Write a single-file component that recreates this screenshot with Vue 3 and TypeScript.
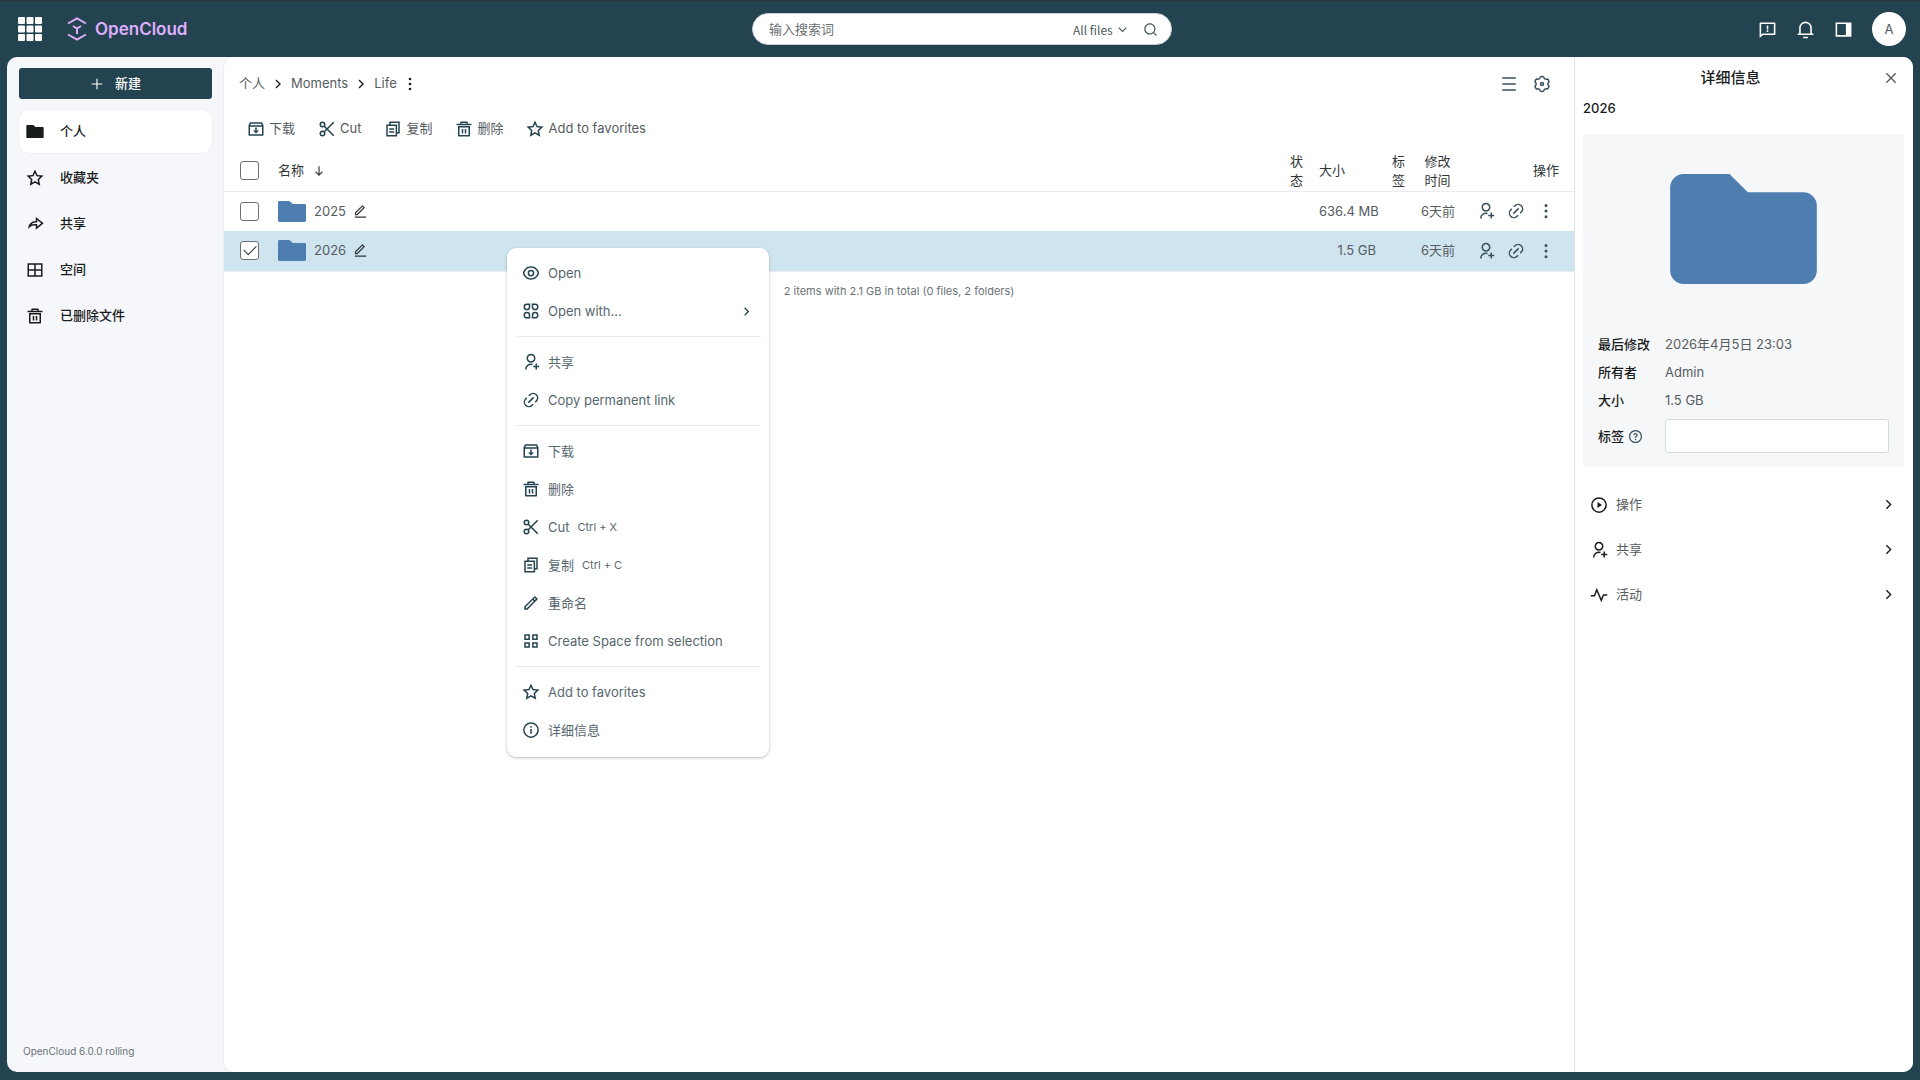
<script setup lang="ts">
import { h, ref } from 'vue'

interface Shape {
  fill?: string
  stroke?: string
}

const shapes: Record<string, Shape> = {
  star: { fill: 'M12 18.26l-7.053 3.948 1.575-7.928L.588 8.792l8.027-.952L12 .5l3.386 7.34 8.027.952-5.934 5.488 1.575 7.928L12 18.26Zm0-2.292 4.247 2.377-.948-4.773 3.573-3.305-4.833-.573L12 5.275 9.962 9.694l-4.833.573 3.573 3.305-.948 4.773L12 15.968Z' },
  forward: { fill: 'M13 14h-2c-3.46 0-6.46 1.95-7.97 4.81C3.01 18.54 3 18.27 3 18 3 12.48 7.48 8 13 8V2.5L23.5 11 13 19.5V14Zm-2-2h4v3.31L20.32 11 15 6.69V10h-2c-2.42 0-4.59 1.08-6.06 2.78C8.2 12.28 9.57 12 11 12Z' },
  spaces: { stroke: 'M3 4h18v16H3ZM12 4v16M3 12h18' },
  trash: { fill: 'M4 8h16v13a1 1 0 0 1-1 1H5a1 1 0 0 1-1-1V8Zm2 2v10h12V10H6Zm3 2h2v6H9v-6Zm4 0h2v6h-2v-6ZM7 5V3a1 1 0 0 1 1-1h8a1 1 0 0 1 1 1v2h5v2H2V5h5Zm2-1v1h6V4H9Z' },
  download: { fill: 'M20 3l2 4v13a1 1 0 0 1-1 1H3a1 1 0 0 1-1-1V7.004L4 3h16Zm0 6H4v10h16V9Zm-7 1v4h3l-4 4-4-4h3v-4h2Zm5.764-5H5.236l-.999 2h15.527l-1-2Z' },
  cut: { stroke: 'M8.3 8.3 21 21M8.3 15.7 21 3', fill: 'M6 2a4 4 0 1 1 0 8 4 4 0 0 1 0-8Zm0 2a2 2 0 1 0 0 4 2 2 0 0 0 0-4ZM6 14a4 4 0 1 1 0 8 4 4 0 0 1 0-8Zm0 2a2 2 0 1 0 0 4 2 2 0 0 0 0-4Z' },
  copy: { stroke: 'M8 7V3h12v14h-3.500M4 7h12.500v14H4ZM7 12h6.500M7 16h6.500' },
  eye: { fill: 'M12 3c5.392 0 9.878 3.88 10.819 9-.94 5.12-5.427 9-10.819 9s-9.878-3.88-10.818-9C2.122 6.88 6.608 3 12 3Zm0 16c4.236 0 7.86-2.948 8.778-7-.918-4.052-4.542-7-8.778-7s-7.86 2.948-8.777 7c.917 4.052 4.541 7 8.777 7Zm0-2.5a4.5 4.5 0 1 1 0-9 4.5 4.5 0 0 1 0 9Zm0-2a2.5 2.5 0 1 0 0-5 2.5 2.5 0 0 0 0 5Z' },
  apps: { stroke: 'M6.5 3H10v3.5A3.5 3.5 0 1 1 6.5 3ZM17.5 3H14v3.5A3.5 3.5 0 1 0 17.5 3ZM6.5 21H10v-3.5A3.5 3.5 0 1 0 6.5 21ZM17.5 21H14v-3.5a3.5 3.5 0 1 1 3.5 3.5Z' },
  userAdd: { fill: 'M14 14.252v2.09A6 6 0 0 0 6 22H4a8 8 0 0 1 10-7.748ZM12 13c-3.315 0-6-2.685-6-6s2.685-6 6-6 6 2.685 6 6-2.685 6-6 6Zm0-2c2.21 0 4-1.79 4-4s-1.79-4-4-4-4 1.79-4 4 1.79 4 4 4Zm6 6v-3h2v3h3v2h-3v3h-2v-3h-3v-2h3Z' },
  link: { fill: 'M18.364 15.536 16.95 14.12l1.414-1.414a5 5 0 1 0-7.071-7.071L9.878 7.05 8.464 5.636l1.415-1.414a7 7 0 0 1 9.899 9.9l-1.414 1.414Zm-2.829 2.828-1.414 1.414a7 7 0 0 1-9.9-9.9l1.415-1.414L7.05 9.88l-1.414 1.414a5 5 0 1 0 7.07 7.07l1.415-1.414 1.414 1.415Zm-.707-10.607 1.415 1.415-7.072 7.07-1.414-1.414 7.071-7.07Z' },
  pencil: { fill: 'M15.728 9.576l-1.414-1.414L5 17.476v1.414h1.414l9.314-9.314Zm1.414-1.414 1.414-1.414-1.414-1.414-1.414 1.414 1.414 1.414ZM7.243 20.89H3v-4.243L16.435 3.212a1 1 0 0 1 1.414 0l2.829 2.829a1 1 0 0 1 0 1.414L7.243 20.89Z' },
  edit: { fill: 'M6.414 15.89 16.556 5.748l-1.414-1.414L5 14.476v1.414h1.414Zm.829 2H3v-4.243L14.435 2.212a1 1 0 0 1 1.414 0l2.829 2.829a1 1 0 0 1 0 1.414L7.243 17.89ZM3 19.89h18v2H3v-2Z' },
  squares: { stroke: 'M4 4h5.5v5.5H4ZM14.5 4H20v5.5h-5.5ZM4 14.5h5.5V20H4ZM14.5 14.5H20V20h-5.5Z' },
  info: { stroke: 'M12 2.500a9.500 9.500 0 1 1 0 19 9.500 9.500 0 0 1 0-19ZM12 10.500V17M12 7v2' },
  help: { stroke: 'M12 2.500a9.500 9.500 0 1 1 0 19 9.500 9.500 0 0 1 0-19ZM9.5 9.8a2.5 2.5 0 1 1 3.4 2.3c-.6.3-.9.7-.9 1.3v.6M12 15.5v2' },
  play: { stroke: 'M12 2.500a9.500 9.500 0 1 1 0 19 9.500 9.500 0 0 1 0-19Z', fill: 'M10 8l6 4-6 4Z' },
  pulse: { stroke: 'M1 13h5l3-8 6 14 3-7h5' },
  right: { stroke: 'M9 6l6 6-6 6' },
  down: { stroke: 'M6 9l6 6 6-6' },
  arrowDown: { stroke: 'M12 4v15M6 13l6 6 6-6' },
  dots: { fill: 'M12 2.5a2 2 0 1 1 0 4 2 2 0 0 1 0-4ZM12 10a2 2 0 1 1 0 4 2 2 0 0 1 0-4ZM12 17.500a2 2 0 1 1 0 4 2 2 0 0 1 0-4Z' },
  plus: { stroke: 'M12 3v18M3 12h18' },
  close: { stroke: 'M5 5l14 14M19 5 5 19' },
  menu: { stroke: 'M3 4h18M3 12h18M3 20h18' },
  gear: { stroke: 'M9.800 2.600Q12 1.500 14.200 2.600 15 6.600 19.200 5.300 21.200 6.700 21.300 9.200 18.200 12 21.300 14.800 21.200 17.300 19.200 18.700 15 17.400 14.200 21.400 12 22.500 9.800 21.400 9 17.400 4.800 18.700 2.800 17.300 2.700 14.800 5.800 12 2.700 9.200 2.800 6.700 4.800 5.300 9 6.600 9.800 2.600ZM12 10a2 2 0 1 1 0 4 2 2 0 0 1 0-4Z' },
  search: { fill: 'M18.031 16.617l4.283 4.282-1.415 1.415-4.282-4.283A8.960 8.960 0 0 1 11 20c-4.968 0-9-4.032-9-9s4.032-9 9-9 9 4.032 9 9a8.960 8.960 0 0 1-1.969 5.617Zm-2.006-.742A6.977 6.977 0 0 0 18 11c0-3.868-3.133-7-7-7-3.868 0-7 3.132-7 7 0 3.867 3.132 7 7 7a6.977 6.977 0 0 0 4.875-1.975l.15-.15Z' },
  feedback: { fill: 'M6.455 19 2 22.500V4a1 1 0 0 1 1-1h18a1 1 0 0 1 1 1v14a1 1 0 0 1-1 1H6.455Zm-.692-2H20V5H4v13.385L5.763 17ZM11 13h2v2h-2v-2Zm0-6h2v5h-2V7Z' },
  bell: { fill: 'M20 17h2v2H2v-2h2v-7a8 8 0 1 1 16 0v7Zm-2 0v-7a6 6 0 1 0-12 0v7h12Zm-9 4h6v2H9v-2Z' },
  panel: { stroke: 'M3 4h18v16H3Z', fill: 'M15 4h6v16h-6Z' },
  grid: { fill: 'M1 0h5a1 1 0 0 1 1 1v5a1 1 0 0 1-1 1H1a1 1 0 0 1-1-1V1a1 1 0 0 1 1-1ZM9.500 0h5a1 1 0 0 1 1 1v5a1 1 0 0 1-1 1h-5a1 1 0 0 1-1-1V1a1 1 0 0 1 1-1ZM18 0h5a1 1 0 0 1 1 1v5a1 1 0 0 1-1 1h-5a1 1 0 0 1-1-1V1a1 1 0 0 1 1-1ZM1 8.500h5a1 1 0 0 1 1 1v5a1 1 0 0 1-1 1H1a1 1 0 0 1-1-1v-5a1 1 0 0 1 1-1ZM9.500 8.500h5a1 1 0 0 1 1 1v5a1 1 0 0 1-1 1h-5a1 1 0 0 1-1-1v-5a1 1 0 0 1 1-1ZM18 8.500h5a1 1 0 0 1 1 1v5a1 1 0 0 1-1 1h-5a1 1 0 0 1-1-1v-5a1 1 0 0 1 1-1ZM1 17h5a1 1 0 0 1 1 1v5a1 1 0 0 1-1 1H1a1 1 0 0 1-1-1v-5a1 1 0 0 1 1-1ZM9.500 17h5a1 1 0 0 1 1 1v5a1 1 0 0 1-1 1h-5a1 1 0 0 1-1-1v-5a1 1 0 0 1 1-1ZM18 17h5a1 1 0 0 1 1 1v5a1 1 0 0 1-1 1h-5a1 1 0 0 1-1-1v-5a1 1 0 0 1 1-1Z' },
}

const folderPath = 'M2.200 0h7.500l3 3h9.100A2.200 2.200 0 0 1 24 5.200v10.600a2.200 2.200 0 0 1-2.200 2.200H2.200A2.200 2.200 0 0 1 0 15.800V2.200A2.200 2.200 0 0 1 2.200 0Z'
const smallFolderPath = 'M1.200 0h8.500l3 2.600h10.100A1.200 1.200 0 0 1 24 3.800v13a1.200 1.200 0 0 1-1.200 1.200H1.200A1.200 1.200 0 0 1 0 16.800V1.200A1.200 1.200 0 0 1 1.200 0Z'

// Folders are wider than tall, so they use a 4:3 box instead of the square one.
const Icon = (props: { name: string; size?: number }) => {
  const size = props.size ?? 18
  if (props.name === 'folder') {
    return h('svg', { class: 'icon', viewBox: '0 0 24 18', width: size, height: Math.floor(size * 0.75), 'aria-hidden': 'true' }, [
      h('path', { d: size > 40 ? folderPath : smallFolderPath, fill: 'currentColor' }),
    ])
  }
  const shape = shapes[props.name]
  return h('svg', { class: 'icon', viewBox: '0 0 24 24', width: size, height: size, 'aria-hidden': 'true' }, [
    shape.fill ? h('path', { d: shape.fill, fill: 'currentColor', 'fill-rule': 'evenodd' }) : null,
    shape.stroke ? h('path', { d: shape.stroke, fill: 'none', stroke: 'currentColor', 'stroke-width': 2 }) : null,
  ])
}
Icon.props = ['name', 'size']

const nav = [
  { icon: 'folder', label: '个人', active: true },
  { icon: 'star', label: '收藏夹', active: false },
  { icon: 'forward', label: '共享', active: false },
  { icon: 'spaces', label: '空间', active: false },
  { icon: 'trash', label: '已删除文件', active: false },
]

const actions = [
  { icon: 'download', label: '下载' },
  { icon: 'cut', label: 'Cut' },
  { icon: 'copy', label: '复制' },
  { icon: 'trash', label: '删除' },
  { icon: 'star', label: 'Add to favorites' },
]

const rows = ref([
  { name: '2025', size: '636.4 MB', modified: '6天前', selected: false },
  { name: '2026', size: '1.5 GB', modified: '6天前', selected: true },
])

interface MenuItem {
  icon: string
  label: string
  keys?: string
  sub?: boolean
}

const menu: MenuItem[][] = [
  [
    { icon: 'eye', label: 'Open' },
    { icon: 'apps', label: 'Open with...', sub: true },
  ],
  [
    { icon: 'userAdd', label: '共享' },
    { icon: 'link', label: 'Copy permanent link' },
  ],
  [
    { icon: 'download', label: '下载' },
    { icon: 'trash', label: '删除' },
    { icon: 'cut', label: 'Cut', keys: 'Ctrl + X' },
    { icon: 'copy', label: '复制', keys: 'Ctrl + C' },
    { icon: 'pencil', label: '重命名' },
    { icon: 'squares', label: 'Create Space from selection' },
  ],
  [
    { icon: 'star', label: 'Add to favorites' },
    { icon: 'info', label: '详细信息' },
  ],
]

const panels = [
  { icon: 'play', label: '操作' },
  { icon: 'userAdd', label: '共享' },
  { icon: 'pulse', label: '活动' },
]

const allSelected = ref(false)
</script>

<template>
  <div class="app">
    <header class="topbar">
      <div class="brand">
        <button class="plain" aria-label="Applications"><Icon name="grid" :size="24" /></button>
        <a class="logo" href="#">
          <svg viewBox="0 0 20 24" width="20" height="24" aria-hidden="true">
            <path
              d="M1 6.500 10 1.500l9 5M1 17.500l9 5 9-5M6 9l4 2.500L14 9M10 11.500V17"
              fill="none"
              stroke="currentColor"
              stroke-width="2"
            />
          </svg>
          <span>OpenCloud</span>
        </a>
      </div>
      <form class="search" @submit.prevent>
        <input type="search" placeholder="输入搜索词" aria-label="输入搜索词" />
        <select aria-label="Search scope">
          <option>All files</option>
        </select>
        <Icon name="down" :size="15" />
        <button class="plain" aria-label="Search"><Icon name="search" :size="15" /></button>
      </form>
      <div class="tools">
        <button class="plain" aria-label="Feedback"><Icon name="feedback" :size="19" /></button>
        <button class="plain" aria-label="Notifications"><Icon name="bell" :size="19" /></button>
        <button class="plain" aria-label="Toggle sidebar"><Icon name="panel" :size="19" /></button>
        <button class="avatar">A</button>
      </div>
    </header>

    <div class="shell">
      <aside class="sidebar">
        <button class="create"><Icon name="plus" :size="14" />新建</button>
        <nav>
          <a v-for="item in nav" :key="item.label" href="#" :class="{ active: item.active }">
            <Icon :name="item.icon" />
            <span>{{ item.label }}</span>
          </a>
        </nav>
        <footer>OpenCloud 6.0.0 rolling</footer>
      </aside>

      <main>
        <div class="crumb-row">
          <nav class="crumbs">
            <a href="#">个人</a>
            <Icon name="right" :size="16" />
            <a href="#">Moments</a>
            <Icon name="right" :size="16" />
            <a href="#">Life</a>
            <button class="plain" aria-label="More"><Icon name="dots" :size="16" /></button>
          </nav>
          <div class="view-tools">
            <button class="plain" aria-label="View mode"><Icon name="menu" :size="18" /></button>
            <button class="plain" aria-label="Display options"><Icon name="gear" :size="18" /></button>
          </div>
        </div>

        <div class="actions">
          <button v-for="a in actions" :key="a.label" class="plain">
            <Icon :name="a.icon" />
            {{ a.label }}
          </button>
        </div>

        <table class="files">
          <colgroup>
            <col class="c-check" />
            <col />
            <col class="c-char" />
            <col class="c-size" />
            <col class="c-char" />
            <col class="c-date" />
            <col class="c-actions" />
          </colgroup>
          <thead>
            <tr>
              <th class="check"><input v-model="allSelected" type="checkbox" aria-label="Select all" /></th>
              <th><span class="name-head">名称 <Icon name="arrowDown" :size="14" /></span></th>
              <th>状态</th>
              <th>大小</th>
              <th>标签</th>
              <th class="center">修改时间</th>
              <th class="last">操作</th>
            </tr>
          </thead>
          <tbody>
            <tr v-for="row in rows" :key="row.name" :class="{ selected: row.selected }">
              <td class="check"><input v-model="row.selected" type="checkbox" :aria-label="row.name" /></td>
              <td>
                <div class="name">
                  <Icon name="folder" :size="28" />
                  <a href="#">{{ row.name }}</a>
                  <button class="plain" aria-label="Rename"><Icon name="edit" :size="15" /></button>
                </div>
              </td>
              <td></td>
              <td class="right">{{ row.size }}</td>
              <td></td>
              <td class="right">{{ row.modified }}</td>
              <td class="quick">
                <div>
                  <button class="plain" aria-label="Share"><Icon name="userAdd" /></button>
                  <button class="plain" aria-label="Copy link"><Icon name="link" /></button>
                  <button class="plain" aria-label="More"><Icon name="dots" /></button>
                </div>
              </td>
            </tr>
          </tbody>
        </table>
        <p class="summary">2 items with 2.1 GB in total (0 files, 2 folders)</p>

        <div class="context" role="menu">
          <ul v-for="(group, g) in menu" :key="g">
            <li v-for="item in group" :key="item.label">
              <button class="plain" role="menuitem">
                <Icon :name="item.icon" />
                <span>{{ item.label }}</span>
                <kbd v-if="item.keys">{{ item.keys }}</kbd>
                <Icon v-if="item.sub" class="sub" name="right" :size="15" />
              </button>
            </li>
          </ul>
        </div>
      </main>

      <aside class="details">
        <div class="details-head">
          <h2>详细信息</h2>
          <button class="plain" aria-label="Close"><Icon name="close" :size="16" /></button>
        </div>
        <h3>2026</h3>
        <section class="card">
          <div class="preview"><Icon name="folder" :size="147" /></div>
          <dl>
            <dt>最后修改</dt>
            <dd>2026年4月5日 23:03</dd>
            <dt>所有者</dt>
            <dd>Admin</dd>
            <dt>大小</dt>
            <dd>1.5 GB</dd>
            <dt class="tag-label"><label for="tags">标签</label><Icon name="help" :size="15" /></dt>
            <dd><input id="tags" type="text" /></dd>
          </dl>
        </section>
        <div class="panels">
          <button v-for="p in panels" :key="p.label" class="plain">
            <Icon :name="p.icon" />
            <span>{{ p.label }}</span>
            <Icon name="right" :size="17" />
          </button>
        </div>
      </aside>
    </div>
  </div>
</template>

<style>
body {
  margin: 0;
  background: #22434f;
}
</style>

<style scoped>
* {
  box-sizing: border-box;
}
.app {
  display: flex;
  flex-direction: column;
  min-height: 100vh;
  padding: 0 7px 8px;
  border-top: 1px solid #30343f;
  background: #22434f;
  color: #565c5f;
  font: 400 13px/19px Inter, 'Noto Sans CJK SC', sans-serif;
}
button,
input,
select {
  font: inherit;
  color: inherit;
}
a {
  color: inherit;
  text-decoration: none;
}
.icon {
  display: block;
  flex: none;
}
.plain {
  display: flex;
  align-items: center;
  padding: 0;
  border: 0;
  background: none;
  cursor: pointer;
}

.topbar {
  display: grid;
  grid-template-columns: 1fr minmax(200px, 420px) 1fr;
  align-items: center;
  height: 56px;
  padding: 0 7px 0 11px;
  color: #fff;
}
.brand,
.logo,
.tools {
  display: flex;
  align-items: center;
}
.brand {
  gap: 25px;
}
.logo {
  gap: 8px;
  color: #dfaefc;
  font-size: 17px;
  font-weight: 600;
}
.search {
  display: flex;
  align-items: center;
  height: 32px;
  padding: 0 13px 0 16px;
  border: 1px solid #c5ced2;
  border-radius: 16px;
  background: #fff;
  color: #4c5a60;
}
.search input {
  flex: 1;
  min-width: 0;
  padding: 0;
  border: 0;
  outline: 0;
  background: none;
}
.search input::placeholder {
  color: #6a6f72;
  opacity: 1;
}
.search select {
  appearance: none;
  margin-right: 2px;
  padding: 0;
  border: 0;
  background: none;
  font-family: 'Noto Sans CJK SC', sans-serif;
  font-size: 12px;
}
.search .plain {
  margin-left: 13px;
}
.tools {
  justify-content: flex-end;
  gap: 19px;
}
.avatar {
  width: 34px;
  height: 34px;
  padding: 0;
  border: 0;
  border-radius: 50%;
  background: #fff;
  color: #4c5a60;
}

.shell {
  display: flex;
  flex: 1;
  overflow: hidden;
  border-radius: 10px;
  background: #f6f7fa;
}
.sidebar {
  display: flex;
  flex: none;
  flex-direction: column;
  width: 217px;
  padding: 11px 12px;
  color: #191c1d;
}
.create {
  display: flex;
  align-items: center;
  justify-content: center;
  gap: 11px;
  height: 31px;
  margin-bottom: 11px;
  border: 0;
  border-radius: 3px;
  background: #22434f;
  color: #fff;
  font-weight: 500;
}
.sidebar nav {
  display: flex;
  flex-direction: column;
  gap: 3px;
}
.sidebar nav a {
  display: flex;
  align-items: center;
  gap: 16px;
  height: 43px;
  padding: 0 7px;
  border-radius: 10px;
  font-weight: 500;
}
.sidebar nav a.active {
  background: #fff;
  box-shadow: 0 0 2px rgba(30, 50, 60, 0.1);
}
.sidebar footer {
  margin-top: auto;
  padding: 0 4px;
  color: #6a7276;
  font-size: 10px;
}

main {
  position: relative;
  flex: 1;
  min-width: 0;
  border-radius: 10px 0 0 10px;
  background: #fff;
  box-shadow: 0 0 2px rgba(30, 50, 60, 0.15);
}
.crumb-row {
  display: flex;
  justify-content: space-between;
  padding: 17px 23px 18px 15px;
}
.crumbs,
.view-tools {
  display: flex;
  align-items: center;
}
.crumbs {
  gap: 5px;
}
.crumbs .icon {
  color: #191c1d;
}
.view-tools {
  gap: 15px;
  color: #36515d;
}
.actions {
  display: flex;
  gap: 23px;
  padding: 8px 23px 13px;
}
.actions .plain {
  gap: 4px;
}
.actions .icon,
.context .icon {
  color: #22434f;
}

.files {
  width: 100%;
  border-collapse: collapse;
  table-layout: fixed;
}
.c-check {
  width: 46px;
}
.c-char {
  width: 29px;
}
.c-size {
  width: 73px;
}
.c-date {
  width: 49px;
}
.c-actions {
  width: 112px;
}
th,
td {
  padding: 0 8px;
  text-align: left;
  font-weight: 400;
}
th {
  height: 40px;
  color: #303537;
}
td {
  height: 40px;
  white-space: nowrap;
}
tr {
  border-bottom: 1px solid #e9edf0;
}
tbody tr:nth-child(odd) {
  border-bottom: 0;
}
th.check,
td.check {
  padding: 0 0 0 16px;
}
.center {
  text-align: center;
}
.right {
  text-align: right;
}
th.last {
  padding-right: 15px;
  text-align: right;
}
.selected {
  background: #cee4ef;
}
.name-head,
.name {
  display: flex;
  align-items: center;
}
.name-head {
  gap: 8px;
}
.name .icon {
  color: #4e7daf;
}
.name a {
  margin: 0 7px 0 8px;
}
.name button .icon {
  color: #303537;
}
td.quick {
  padding-right: 19px;
  color: #36515d;
}
.quick div {
  display: flex;
  justify-content: flex-end;
  gap: 12px;
}
input[type='checkbox'] {
  display: grid;
  place-items: center;
  width: 19px;
  height: 19px;
  margin: 0;
  border: 1px solid #6b7174;
  border-radius: 3px;
  background: #fff;
  appearance: none;
}
input[type='checkbox']:checked::after {
  content: '';
  width: 11px;
  height: 6px;
  margin-top: -4px;
  border: solid #303537;
  border-width: 0 0 1px 1px;
  transform: rotate(-45deg);
}
.summary {
  margin: 10px 0;
  color: #6a7276;
  font-size: 11px;
  text-align: center;
}

.context {
  position: absolute;
  top: 191px;
  left: 283px;
  width: 262px;
  padding: 6px 8px 8px;
  border-radius: 9px;
  background: #fff;
  box-shadow: 0 1px 3px rgba(20, 40, 50, 0.3);
  color: #56676f;
}
.context ul {
  margin: 0;
  padding: 0;
  list-style: none;
}
.context ul + ul {
  margin-top: 6px;
  padding-top: 6px;
  border-top: 1px solid #e9edf0;
}
.context .plain {
  width: 100%;
  height: 38px;
  gap: 8px;
  padding: 0 7px;
}
.context kbd {
  font: inherit;
  font-size: 11px;
}
.context .sub {
  margin-left: auto;
}

.details {
  flex: none;
  width: 339px;
  padding: 11px 9px 11px 8px;
  border-left: 1px solid #e9edf0;
  background: #fff;
}
.details-head {
  display: flex;
  align-items: center;
  padding: 0 5px 0 0;
}
h2,
h3 {
  margin: 0;
  color: #191c1d;
  font-weight: 500;
}
h2 {
  flex: 1;
  padding-right: 5px;
  font-size: 15px;
  text-align: center;
}
h3 {
  margin: 12px 0 16px;
  font-size: 13px;
}
.card {
  padding: 40px 15px 14px;
  background: #f6f7f9;
}
.preview {
  display: flex;
  justify-content: center;
  color: #4e7daf;
}
dl {
  display: grid;
  grid-template-columns: 55px 1fr;
  align-items: center;
  gap: 9px 12px;
  margin: 51px 0 0;
}
dt {
  color: #191c1d;
  font-weight: 500;
  white-space: nowrap;
}
dd {
  margin: 0;
}
.tag-label {
  display: flex;
  align-items: center;
  gap: 4px;
}
.tag-label .icon {
  color: #36515d;
}
dd input {
  display: block;
  width: 100%;
  height: 34px;
  border: 1px solid #d5dce0;
  border-radius: 3px;
  background: #fff;
}
.panels {
  padding: 15px 7px;
}
.panels .plain {
  width: 100%;
  height: 45px;
  gap: 8px;
}
.panels .icon {
  color: #191c1d;
}
.panels span {
  flex: 1;
  text-align: left;
}
</style>
